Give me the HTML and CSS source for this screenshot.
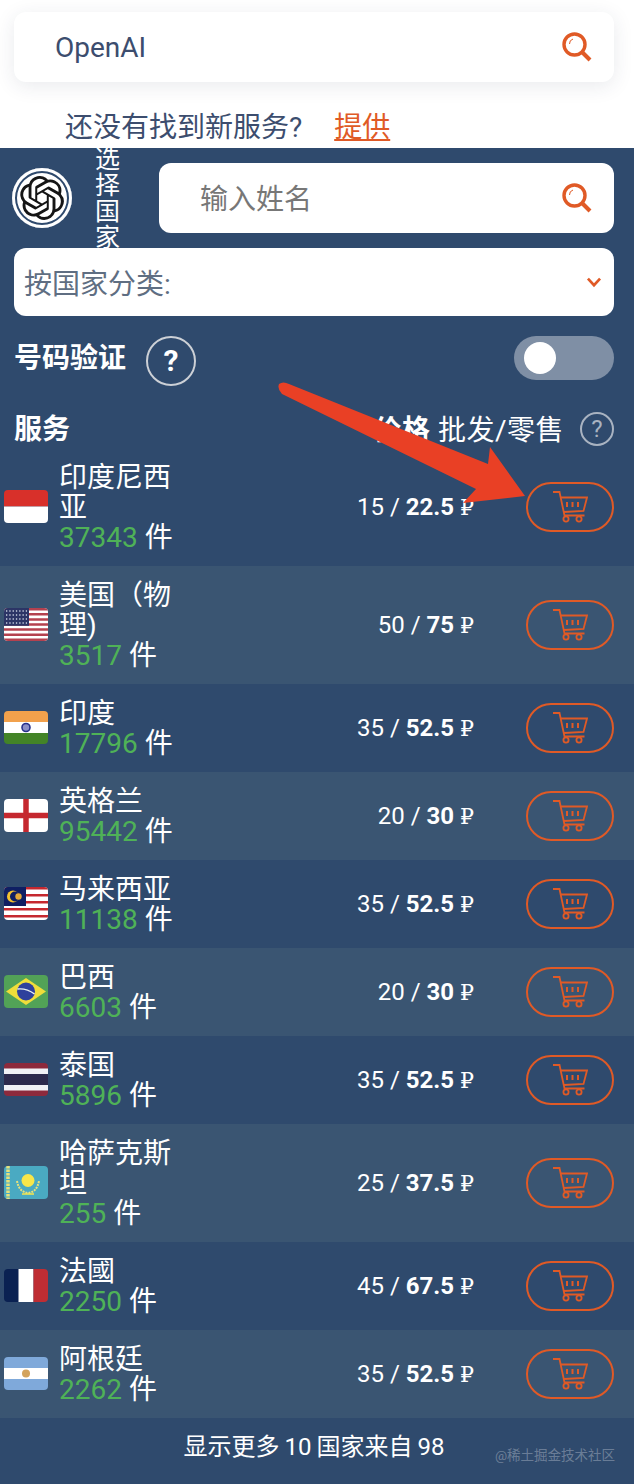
FILE: index.html

```html
<!DOCTYPE html>
<html lang="zh">
<head>
  <meta charset="UTF-8" />
  <meta name="viewport" content="width=device-width, initial-scale=1.0" />
  <title>OpenAI</title>
  <link rel="stylesheet" href="styles.css">
</head>
<body>
  <svg class="sprites" width="0" height="0">
    <symbol id="search" viewBox="0 0 30 30">
      <circle cx="12.500" cy="12.500" r="10.500" fill="none" stroke="currentColor" stroke-width="3.400"/>
      <path d="M20 20l8 8" fill="none" stroke="currentColor" stroke-width="4"/>
      <path d="M7.500 12a5 5 0 0 1 3.500-5" fill="none" stroke="currentColor" stroke-width="1"/>
    </symbol>
    <symbol id="cart" viewBox="0 0 36 32">
      <g fill="none" stroke="currentColor" stroke-width="1.800">
        <path d="M1 1h6.500l5 23.500h20"/>
        <path d="M8.500 6.500h26.500l-3.500 13.500l-19.500 1"/>
        <circle cx="14" cy="28" r="2.600"/>
        <circle cx="27" cy="28" r="2.600"/>
        <path d="M15 11v5M20.500 11v5M26 11v5" stroke-width="2"/>
      </g>
    </symbol>
  </svg>

  <section class="top">
    <div class="search-card">
      <span class="search-value">OpenAI</span>
      <svg class="search-icon"><use href="#search"/></svg>
    </div>
    <p class="suggest">还没有找到新服务? <a href="#">提供</a></p>
  </section>

  <section class="panel">
    <div class="service-head">
      <div class="logo">
        <svg viewBox="0 0 24 24" width="44" height="44"><path fill="#151515" d="M22.2819 9.8211a5.9847 5.9847 0 0 0-.5157-4.9108 6.0462 6.0462 0 0 0-6.5098-2.9A6.0651 6.0651 0 0 0 4.9807 4.1818a5.9847 5.9847 0 0 0-3.9977 2.9 6.0462 6.0462 0 0 0 .7427 7.0966 5.98 5.98 0 0 0 .511 4.9107 6.051 6.051 0 0 0 6.5146 2.9001A5.9847 5.9847 0 0 0 13.2599 24a6.0557 6.0557 0 0 0 5.7718-4.2058 5.9894 5.9894 0 0 0 3.9977-2.9001 6.0557 6.0557 0 0 0-.7475-7.0729zm-9.022 12.6081a4.4755 4.4755 0 0 1-2.8764-1.0408l.1419-.0804 4.7783-2.7582a.7948.7948 0 0 0 .3927-.6813v-6.7369l2.02 1.1686a.071.071 0 0 1 .038.052v5.5826a4.504 4.504 0 0 1-4.4945 4.4944zm-9.6607-4.1254a4.4708 4.4708 0 0 1-.5346-3.0137l.142.0852 4.783 2.7582a.7712.7712 0 0 0 .7806 0l5.8428-3.3685v2.3324a.0804.0804 0 0 1-.0332.0615L9.74 19.9502a4.4992 4.4992 0 0 1-6.1408-1.6464zM2.3408 7.8956a4.485 4.485 0 0 1 2.3655-1.9728V11.6a.7664.7664 0 0 0 .3879.6765l5.8144 3.3543-2.0201 1.1685a.0757.0757 0 0 1-.071 0l-4.8303-2.7865A4.504 4.504 0 0 1 2.3408 7.872zm16.5963 3.8558L13.1038 8.364 15.1192 7.2a.0757.0757 0 0 1 .071 0l4.8303 2.7913a4.4944 4.4944 0 0 1-.6765 8.1042v-5.6772a.79.79 0 0 0-.407-.667zm2.0107-3.0231l-.142-.0852-4.7735-2.7818a.7759.7759 0 0 0-.7854 0L9.409 9.2297V6.8974a.0662.0662 0 0 1 .0284-.0615l4.8303-2.7866a4.4992 4.4992 0 0 1 6.6802 4.66zM8.3065 12.863l-2.02-1.1638a.0804.0804 0 0 1-.038-.0567V6.0742a4.4992 4.4992 0 0 1 7.3757-3.4537l-.142.0805L8.704 5.459a.7948.7948 0 0 0-.3927.6813zm1.0976-2.3654l2.602-1.4998 2.6069 1.4998v2.9994l-2.5974 1.4997-2.6067-1.4997Z"/></svg>
      </div>
      <span class="country-label">选择国家</span>
      <div class="name-input">
        <span>输入姓名</span>
        <svg class="search-icon"><use href="#search"/></svg>
      </div>
    </div>

    <div class="sort-select">
      <span>按国家分类:</span>
      <svg class="chevron" viewBox="0 0 14 10" width="16" height="11"><path d="M1.500 1.500L7 7.500l5.500-6" fill="none" stroke="currentColor" stroke-width="2.400"/></svg>
    </div>

    <div class="verify">
      <strong>号码验证</strong>
      <span class="help-big">?</span>
      <span class="toggle"><i></i></span>
    </div>

    <div class="list-head">
      <strong>服务</strong>
      <span class="price-title"><b>价格</b> 批发/零售</span>
      <span class="help-small">?</span>
    </div>

    <div class="row">
      <svg class="flag" viewBox="0 0 44 33"><rect width="44" height="16.500" fill="#d8302a"/><rect y="16.500" width="44" height="16.500" fill="#fff"/></svg>
      <div class="name">印度尼西亚<br><em>37343</em> 件</div>
      <div class="price">15 / <b>22.5</b> <span class="rub">₽</span></div>
      <a class="buy" href="#"><svg><use href="#cart"/></svg></a>
    </div>

    <div class="row">
      <svg class="flag" viewBox="0 0 44 33">
        <rect width="44" height="33" fill="#fff"/>
        <path d="M0 1.300h44M0 6.300h44M0 11.400h44M0 16.500h44M0 21.600h44M0 26.700h44M0 31.700h44" stroke="#b4414f" stroke-width="2.500"/>
        <rect width="25" height="17.800" fill="#2c3566"/>
        <path d="M2 3h21M2 7h21M2 11h21M2 15h21" stroke="#c9cfe0" stroke-width="1.300" stroke-dasharray="1.300 2"/>
      </svg>
      <div class="name">美国（物理)<br><em>3517</em> 件</div>
      <div class="price">50 / <b>75</b> <span class="rub">₽</span></div>
      <a class="buy" href="#"><svg><use href="#cart"/></svg></a>
    </div>

    <div class="row">
      <svg class="flag" viewBox="0 0 44 33">
        <rect width="44" height="11" fill="#f2a14c"/><rect y="11" width="44" height="11" fill="#fff"/><rect y="22" width="44" height="11" fill="#438427"/>
        <circle cx="22" cy="16.500" r="4" fill="#8b8fc8" stroke="#27308a" stroke-width="1.600"/>
      </svg>
      <div class="name">印度<br><em>17796</em> 件</div>
      <div class="price">35 / <b>52.5</b> <span class="rub">₽</span></div>
      <a class="buy" href="#"><svg><use href="#cart"/></svg></a>
    </div>

    <div class="row">
      <svg class="flag" viewBox="0 0 44 33">
        <rect width="44" height="33" fill="#fff"/>
        <path d="M22 0v33M0 16.500h44" stroke="#c5282f" stroke-width="5.500"/>
      </svg>
      <div class="name">英格兰<br><em>95442</em> 件</div>
      <div class="price">20 / <b>30</b> <span class="rub">₽</span></div>
      <a class="buy" href="#"><svg><use href="#cart"/></svg></a>
    </div>

    <div class="row">
      <svg class="flag" viewBox="0 0 44 33">
        <rect width="44" height="33" fill="#fff"/>
        <path d="M0 1.200h44M0 8.200h44M0 15.200h44M0 22.200h44M0 29.200h44" stroke="#c5282f" stroke-width="2.400"/>
        <rect width="22" height="19" fill="#0f1f63"/>
        <circle cx="9" cy="9.500" r="6" fill="#f2c230"/>
        <circle cx="11" cy="9.500" r="5" fill="#0f1f63"/>
        <circle cx="14.500" cy="9.500" r="3.200" fill="#e3a93a"/>
      </svg>
      <div class="name">马来西亚<br><em>11138</em> 件</div>
      <div class="price">35 / <b>52.5</b> <span class="rub">₽</span></div>
      <a class="buy" href="#"><svg><use href="#cart"/></svg></a>
    </div>

    <div class="row">
      <svg class="flag" viewBox="0 0 44 33">
        <rect width="44" height="33" fill="#52a257"/>
        <path d="M22 3L42 16.500L22 30L2 16.500z" fill="#f0dd3a"/>
        <circle cx="22" cy="16.500" r="9" fill="#2f409c"/>
        <path d="M13.500 14q9-1 17 5" fill="none" stroke="#e8eef0" stroke-width="1.400"/>
      </svg>
      <div class="name">巴西<br><em>6603</em> 件</div>
      <div class="price">20 / <b>30</b> <span class="rub">₽</span></div>
      <a class="buy" href="#"><svg><use href="#cart"/></svg></a>
    </div>

    <div class="row">
      <svg class="flag" viewBox="0 0 44 33">
        <rect width="44" height="33" fill="#8d2a3c"/>
        <rect y="5.500" width="44" height="22" fill="#f1f1f5"/>
        <rect y="11" width="44" height="11" fill="#2d2a4c"/>
      </svg>
      <div class="name">泰国<br><em>5896</em> 件</div>
      <div class="price">35 / <b>52.5</b> <span class="rub">₽</span></div>
      <a class="buy" href="#"><svg><use href="#cart"/></svg></a>
    </div>

    <div class="row">
      <svg class="flag" viewBox="0 0 44 33">
        <rect width="44" height="33" fill="#4aaac2"/>
        <path d="M4 0v33" stroke="#e8e27a" stroke-width="3.500" stroke-dasharray="2.500 1"/>
        <circle cx="24" cy="14.500" r="6.500" fill="#f7e64a"/>
        <path d="M13 15q2 11 11 12q9-1 11-12" fill="none" stroke="#e8e27a" stroke-width="2" stroke-dasharray="2 1"/>
        <path d="M18 28h12" stroke="#f7e64a" stroke-width="1.500"/>
      </svg>
      <div class="name">哈萨克斯坦<br><em>255</em> 件</div>
      <div class="price">25 / <b>37.5</b> <span class="rub">₽</span></div>
      <a class="buy" href="#"><svg><use href="#cart"/></svg></a>
    </div>

    <div class="row">
      <svg class="flag" viewBox="0 0 44 33"><rect width="15" height="33" fill="#0a2152"/><rect x="14.500" width="15" height="33" fill="#fff"/><rect x="29.500" width="14.500" height="33" fill="#bf2d33"/></svg>
      <div class="name">法國<br><em>2250</em> 件</div>
      <div class="price">45 / <b>67.5</b> <span class="rub">₽</span></div>
      <a class="buy" href="#"><svg><use href="#cart"/></svg></a>
    </div>

    <div class="row">
      <svg class="flag" viewBox="0 0 44 33">
        <rect width="44" height="33" fill="#7fa9da"/><rect y="11" width="44" height="11" fill="#fff"/>
        <circle cx="22" cy="16.500" r="4" fill="#d3a35c"/>
      </svg>
      <div class="name">阿根廷<br><em>2262</em> 件</div>
      <div class="price">35 / <b>52.5</b> <span class="rub">₽</span></div>
      <a class="buy" href="#"><svg><use href="#cart"/></svg></a>
    </div>

    <div class="more">显示更多 10 国家来自 98</div>
  </section>

  <svg class="arrow" viewBox="0 0 636 1484" width="636" height="1484"><path d="M279 384Q283 381 289 384L488 464L490 447L525 496L463 503L476 489L282 394Q277 389 279 384Z" fill="#e94025"/></svg>
  <span class="watermark">@稀土掘金技术社区</span>
</body>
</html>
```

FILE: styles.css

```css
* {
  box-sizing: border-box;
}
body {
  font-family: Roboto, 'Noto Sans CJK SC', sans-serif;
  background-color: #fff;
  margin: 0;
  width: 636px;
  position: relative;
}
.sprites {
  position: absolute;
}
.top {
  width: 634px;
  height: 148px;
  padding: 12px 20px 0 14px;
}
.search-card {
  height: 70px;
  background: #fff;
  border-radius: 12px;
  box-shadow: 0 4px 20px rgba(40, 50, 80, 0.1);
  display: flex;
  align-items: center;
  justify-content: space-between;
  padding: 0 22px 0 41px;
}
.search-value {
  font-size: 28px;
  color: #3c4d6e;
}
.search-icon {
  width: 30px;
  height: 30px;
  color: #e05a26;
  flex: none;
}
.suggest {
  margin: 28px 0 0 51px;
  font-size: 28px;
  line-height: 36px;
  color: #3c4d6e;
}
.suggest a {
  color: #e05a26;
  margin-left: 25px;
}
.panel {
  width: 634px;
  height: 1336px;
  background-color: #2f4a6d;
  overflow: hidden;
  color: #fff;
}
.service-head {
  display: flex;
  align-items: center;
  padding: 15px 20px 0 12px;
  height: 85px;
}
.logo {
  width: 60px;
  height: 60px;
  border-radius: 50%;
  background: #fff;
  box-shadow: inset 0 0 0 3px #fff, inset 0 0 0 5px #2f4a6d;
  display: flex;
  align-items: center;
  justify-content: center;
  flex: none;
}
.country-label {
  width: 26px;
  margin: 2px 0 0 23px;
  font-size: 25px;
  line-height: 26px;
  flex: none;
}
.name-input {
  margin-left: 38px;
  flex: 1;
  height: 70px;
  background: #fff;
  border-radius: 12px;
  display: flex;
  align-items: center;
  justify-content: space-between;
  padding: 0 22px 0 41px;
  font-size: 28px;
  color: #777;
}
.name-input span {
  margin-bottom: 2px;
}
.sort-select {
  position: relative;
  margin: 15px 20px 0 14px;
  height: 68px;
  background: #fff;
  border-radius: 12px;
  display: flex;
  align-items: center;
  justify-content: space-between;
  padding: 0 12px 0 10px;
  font-size: 28px;
  color: #5f6e82;
}
.chevron {
  color: #e05a26;
}
.verify {
  display: flex;
  align-items: center;
  margin: 20px 20px 0 14px;
  height: 50px;
}
.verify strong {
  font-size: 28px;
  margin-bottom: 10px;
}
.help-big {
  width: 50px;
  height: 50px;
  margin-left: 20px;
  border: 2px solid #ccd0d6;
  border-radius: 50%;
  text-align: center;
  font-size: 30px;
  font-weight: 700;
  line-height: 46px;
}
.toggle {
  margin-left: auto;
  margin-bottom: 6px;
  width: 100px;
  height: 44px;
  border-radius: 22px;
  background: #7f8fa5;
  padding: 6px 10px;
}
.toggle i {
  display: block;
  width: 32px;
  height: 32px;
  border-radius: 50%;
  background: #fff;
}
.list-head {
  display: flex;
  align-items: center;
  margin: 24px 20px 0 14px;
  height: 38px;
  font-size: 28px;
}
.list-head strong {
  margin: 0 auto 4px 0;
  font-weight: 700;
}
.price-title {
  margin-bottom: 2px;
  letter-spacing: 0.5px;
}
.price-title b {
  font-weight: 700;
}
.help-small {
  width: 34px;
  height: 34px;
  margin-left: 16px;
  border: 2px solid #a9b3c1;
  border-radius: 50%;
  text-align: center;
  color: #a9b3c1;
  font-size: 24px;
  line-height: 30px;
}
.row {
  display: flex;
  align-items: center;
  padding: 13px 20px 13px 4px;
}
.row:nth-of-type(even) {
  background: #3a5572;
}
.flag {
  width: 44px;
  height: 33px;
  border-radius: 4px;
  flex: none;
  margin-bottom: 2px;
}
.name {
  margin-left: 11px;
  width: 118px;
  padding-top: 2px;
  font-size: 28px;
  line-height: 30px;
}
.name em {
  font-style: normal;
  color: #4fb257;
}
.price {
  margin-left: auto;
  font-size: 24px;
  white-space: nowrap;
}
.price b {
  font-weight: 700;
}
.rub {
  font-family: 'DejaVu Serif', serif;
  font-size: 22px;
}
.buy {
  margin-left: 52px;
  width: 88px;
  height: 50px;
  border: 2px solid #e05a26;
  border-radius: 25px;
  color: #e05a26;
  display: flex;
  align-items: center;
  justify-content: center;
  flex: none;
}
.buy svg {
  width: 36px;
  height: 32px;
}
.more {
  height: 66px;
  line-height: 58px;
  text-align: center;
  font-size: 24px;
  word-spacing: -1px;
  padding-right: 6px;
}
.arrow {
  position: absolute;
  left: 0;
  top: 0;
  pointer-events: none;
}
.watermark {
  position: absolute;
  left: 495px;
  top: 1445px;
  font-size: 13.5px;
  line-height: 20px;
  color: rgba(255, 255, 255, 0.3);
  white-space: nowrap;
}
```
